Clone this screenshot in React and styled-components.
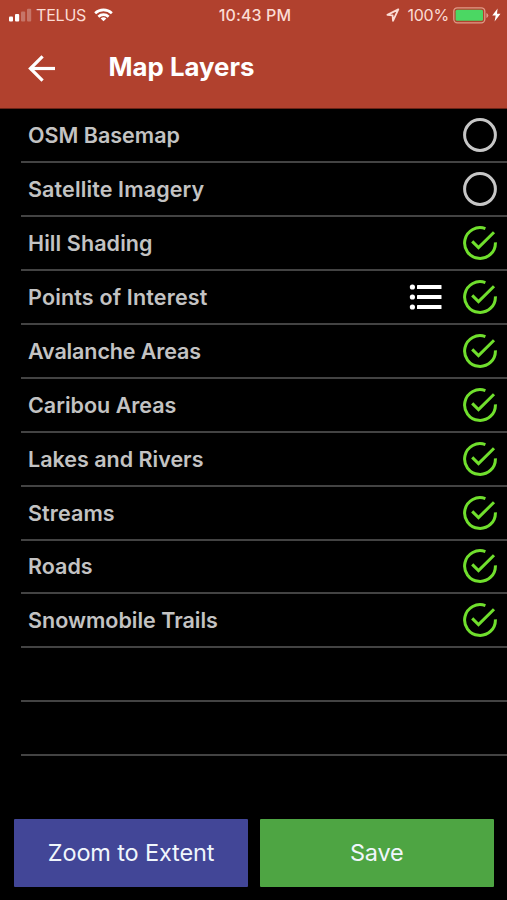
import { useState } from "react";
import styled, { createGlobalStyle } from "styled-components";

const GlobalStyle = createGlobalStyle`
  * {
    box-sizing: border-box;
  }
  body {
    margin: 0;
    background: #000;
    font-family: Inter, "Liberation Sans", sans-serif;
  }
`;

const Screen = styled.div`
  width: 507px;
  height: 900px;
  display: flex;
  flex-direction: column;
  background: #000;
  overflow: hidden;
`;

const Header = styled.header`
  height: 109px;
  flex-shrink: 0;
  background: #b1412e;
  border-bottom: 1px solid #6b2417;
  color: #fff;
`;

const StatusBar = styled.div`
  height: 30px;
  display: grid;
  grid-template-columns: 1fr auto 1fr;
  align-items: center;
  padding: 0 6px 0 9px;
  font-size: 16px;
  line-height: 30px;
  color: #fbdcd5;
`;

const StatusGroup = styled.div`
  display: flex;
  align-items: center;
  justify-content: ${(props) => (props.$end ? "flex-end" : "flex-start")};
`;

const Carrier = styled.span`
  margin: 0 8px 0 4px;
  letter-spacing: -0.2px;
`;

const Clock = styled.span`
  font-weight: 500;
  letter-spacing: 0.1px;
`;

const Percent = styled.span`
  margin: 0 4px 0 7px;
  letter-spacing: -0.2px;
`;

const TitleBar = styled.div`
  height: 78px;
  display: flex;
  align-items: flex-start;
  padding: 20px 0 0 26px;
`;

const BackButton = styled.button`
  width: 32px;
  height: 36px;
  padding: 0;
  border: none;
  background: none;
  color: #fff;
  cursor: pointer;
`;

const Title = styled.h1`
  margin: 0 0 0 50.5px;
  font-size: 25.8px;
  line-height: 33px;
  font-weight: 700;
`;

const Layers = styled.ul`
  list-style: none;
  margin: 0 0 0 21px;
  padding: 0;
`;

const Layer = styled.li`
  height: 53.95px;
  display: flex;
  align-items: center;
  padding: 0 10px 0 7px;
  border-bottom: 2px solid #434343;
`;

const LayerName = styled.span`
  flex-grow: 1;
  font-size: 21.5px;
  line-height: 28px;
  font-weight: 600;
  letter-spacing: ${(props) => props.$tracking || 0}px;
  color: #c3c3c3;
`;

const Toggle = styled.button`
  width: 34px;
  height: 34px;
  padding: 0;
  border: none;
  background: none;
  cursor: pointer;
`;

const LegendButton = styled(Toggle)`
  margin-right: 20px;
`;

const Icon = styled.svg`
  display: block;
  flex-shrink: 0;
`;

const Actions = styled.div`
  display: flex;
  gap: 12px;
  margin-top: auto;
  padding: 0 13.4px 13.5px 14.2px;
`;

const ActionButton = styled.button`
  flex: 1 1 0;
  height: 67.5px;
  padding: 0;
  border: none;
  border-radius: 1px;
  background: ${(props) => props.$color};
  color: #f0f6fc;
  font-family: inherit;
  font-size: 23.5px;
  line-height: 30px;
  letter-spacing: -0.15px;
  cursor: pointer;
`;

const initialLayers = [
  { name: "OSM Basemap", on: false },
  { name: "Satellite Imagery", on: false, tracking: 0.13 },
  { name: "Hill Shading", on: true, tracking: 0.1 },
  { name: "Points of Interest", on: true, legend: true, tracking: 0.17 },
  { name: "Avalanche Areas", on: true, tracking: -0.12 },
  { name: "Caribou Areas", on: true },
  { name: "Lakes and Rivers", on: true },
  { name: "Streams", on: true, tracking: 0.1 },
  { name: "Roads", on: true },
  { name: "Snowmobile Trails", on: true },
];

function SignalIcon() {
  return (
    <Icon width="23" height="14" viewBox="0 0 23 14" fill="#fff">
      <rect x="0" y="8.5" width="4" height="5" rx="1" />
      <rect x="6" y="6" width="4.2" height="7.5" rx="1" />
      <rect x="12" y="3.5" width="4.2" height="10" rx="1" opacity=".28" />
      <rect x="18" y="0.8" width="4.2" height="12.7" rx="1" opacity=".28" />
    </Icon>
  );
}

function WifiIcon() {
  return (
    <Icon width="19" height="14" viewBox="0 0 20 14" fill="none" stroke="#fff" strokeWidth="2.7">
      <path d="M1.2 5.2a12.6 12.6 0 0 1 17.6 0" />
      <path d="M4.6 8.8a7.8 7.8 0 0 1 10.8 0" />
      <path d="M10 13.7l-3-3.1a4.5 4.5 0 0 1 6 0z" fill="#fff" stroke="none" />
    </Icon>
  );
}

function LocationIcon() {
  return (
    <Icon width="14" height="14" viewBox="0 0 14 14" fill="none" stroke="#fbdcd5" strokeWidth="1.8" strokeLinejoin="round">
      <path d="M12.3 1.4L1.4 6.9l5.2.5.4 5.4z" />
    </Icon>
  );
}

function BatteryIcon() {
  return (
    <Icon width="36" height="17" viewBox="0 0 36 17">
      <rect x="0.8" y="0.8" width="31" height="15" rx="3.5" fill="none" stroke="#df9a87" strokeWidth="1.3" />
      <rect x="2.6" y="2.8" width="27.4" height="11" rx="1.5" fill="#4bd763" />
      <path d="M33.4 6a2.6 2.6 0 0 1 0 5z" fill="#df9a87" />
    </Icon>
  );
}

function BoltIcon() {
  return (
    <Icon width="12" height="14" viewBox="-3 0 12 14" fill="#fff">
      <path d="M5.6 0.6L0.3 7.6h3.4L2.6 13.4l5.9-7.7H5z" />
    </Icon>
  );
}

function BackIcon() {
  return (
    <Icon width="32" height="36" viewBox="0 0 32 36" fill="none" stroke="#fff" strokeWidth="3.2">
      <path d="M29 18.5H4" />
      <path d="M16.6 6.3L4.4 18.5l12.2 12.2" />
    </Icon>
  );
}

function CheckIcon({ on }) {
  if (!on) {
    return (
      <Icon width="34" height="34" viewBox="0 0 34 34">
        <circle cx="17" cy="17" r="15.4" fill="none" stroke="#c6c6c6" strokeWidth="3" />
      </Icon>
    );
  }
  return (
    <Icon width="34" height="34" viewBox="0 0 34 34" fill="none" stroke="#70df2d" strokeWidth="3">
      <path d="M22.4 2.6A15.4 15.4 0 1 0 32.4 16.4" />
      <path d="M9.2 15.4l6.3 6.2L31 6.2" />
    </Icon>
  );
}

function ListIcon() {
  return (
    <Icon width="34" height="34" viewBox="0 0 34 34" fill="#fff">
      {[7, 17, 27].map((y) => (
        <g key={y}>
          <circle cx="3.4" cy={y} r="2.6" />
          <rect x="8" y={y - 2} width="24.5" height="4" rx=".6" />
        </g>
      ))}
    </Icon>
  );
}

export default function App() {
  const [layers, setLayers] = useState(initialLayers);

  const toggleLayer = (name) => {
    setLayers(layers.map((l) => (l.name === name ? { ...l, on: !l.on } : l)));
  };

  return (
    <>
      <GlobalStyle />
      <Screen>
        <Header>
          <StatusBar>
            <StatusGroup>
              <SignalIcon />
              <Carrier>TELUS</Carrier>
              <WifiIcon />
            </StatusGroup>
            <Clock>10:43 PM</Clock>
            <StatusGroup $end>
              <LocationIcon />
              <Percent>100%</Percent>
              <BatteryIcon />
              <BoltIcon />
            </StatusGroup>
          </StatusBar>
          <TitleBar>
            <BackButton aria-label="Back">
              <BackIcon />
            </BackButton>
            <Title>Map Layers</Title>
          </TitleBar>
        </Header>
        <Layers>
          {layers.map((layer) => (
            <Layer key={layer.name}>
              <LayerName $tracking={layer.tracking}>{layer.name}</LayerName>
              {layer.legend && (
                <LegendButton aria-label="Legend">
                  <ListIcon />
                </LegendButton>
              )}
              <Toggle aria-label={layer.name} onClick={() => toggleLayer(layer.name)}>
                <CheckIcon on={layer.on} />
              </Toggle>
            </Layer>
          ))}
          {/* empty rows below the last layer */}
          <Layer />
          <Layer />
        </Layers>
        <Actions>
          <ActionButton $color="#424697">Zoom to Extent</ActionButton>
          <ActionButton $color="#4ea543">Save</ActionButton>
        </Actions>
      </Screen>
    </>
  );
}
